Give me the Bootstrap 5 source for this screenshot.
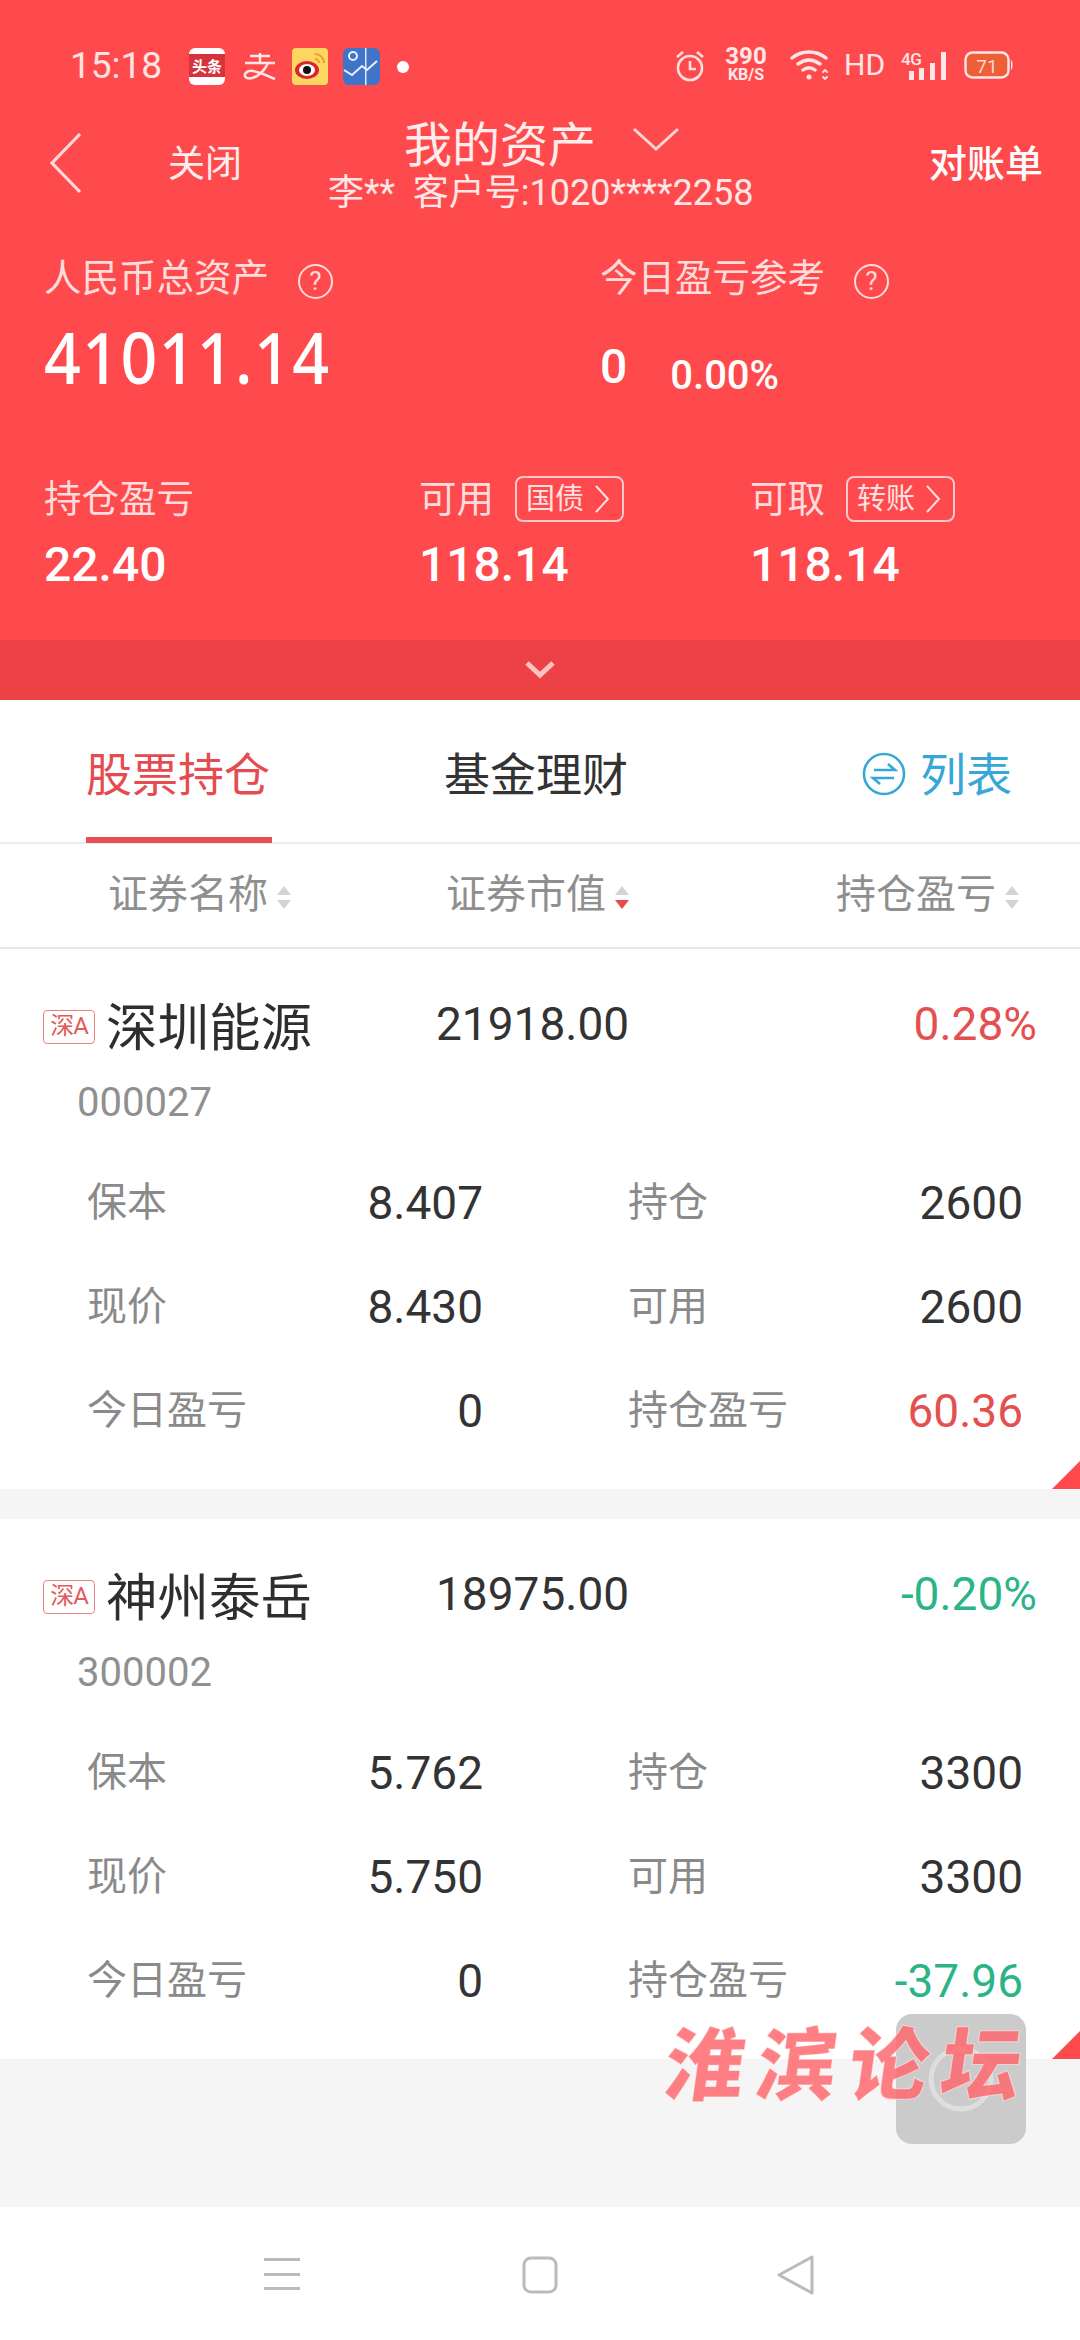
<!DOCTYPE html>
<html lang="zh">
<head>
<meta charset="utf-8">
<title>我的资产</title>
<link href="https://cdn.jsdelivr.net/npm/bootstrap@5.3.0/dist/css/bootstrap.min.css" rel="stylesheet">
<style>
html,body{width:1080px;height:2340px;margin:0;overflow:hidden}
body{position:relative;background:#f5f5f5;font-family:Roboto,"Noto Sans CJK SC",sans-serif;color:#333}
.hero{background:#ff4a4d;color:#fff;height:700px;display:flex;flex-direction:column}
.stbar{height:120px;padding:46px 36px 0 70px;font-size:35px;line-height:40px;color:#fde}
.stbar svg{display:block}
.time{width:113px;color:#ffe3e3;font-size:37px;white-space:nowrap}
.navrow{height:98px;position:relative}
.backic{margin-left:48px;width:40px}
.closetxt{margin-left:80px;font-size:37px;line-height:44px;margin-top:23px;color:#ffecec}
.titlebox{margin-left:86px;width:470px}
.maintitle{font-size:48px;line-height:52px;padding-left:76px;color:#ffecec;height:50px}
.maintitle svg{margin-left:36px;vertical-align:10px}
.subt{font-size:36px;line-height:38px;margin-top:4px;white-space:nowrap;color:#ffe6e6}
.billtxt{font-size:38px;line-height:44px;margin-top:22px;margin-left:auto;margin-right:37px;font-weight:500}
.sumrow{padding:39px 0 0 44px;height:258px}
.sumcol1{width:556px}
.lab{font-size:37.5px;line-height:42px;color:#ffdcdc;white-space:nowrap}
.balrow .lab{height:46px;line-height:46px}
.qm{display:inline-block;width:35px;height:35px;border:2px solid #ffdcdc;border-radius:50%;font-size:26px;line-height:31px;text-align:center;margin-left:29px;vertical-align:1px}
.bignum{font-size:70px;line-height:80px;font-weight:500;margin-top:18px;letter-spacing:1.5px;font-family:"Noto Sans",sans-serif;transform-origin:left;transform:scaleX(.92)}
.daynum{font-size:48px;line-height:60px;margin-top:38px;font-weight:500}
.daypct{font-size:40px;margin-left:43px;font-weight:500;position:relative;top:6px}
.balrow{padding:0 0 0 44px;height:0;flex:1}
.balc1{width:375px}.balc2{width:331px}
.val{font-size:48px;line-height:54px;font-weight:500;margin-top:16px}
.tagbtn{display:inline-flex;align-items:center;height:46px;width:109px;border:2px solid #ffc9c9;border-radius:8px;font-size:29px;padding-left:9px;margin-left:21px;vertical-align:3px;line-height:40px;color:#ffe1e1}
.tagbtn svg{margin-left:10px}
.hero-fold{height:60px;background:#ed4245;display:flex;justify-content:center;align-items:center}
.tabs{height:144px;background:#fff;border-bottom:2px solid #ececec;font-size:46px;position:relative}
.tabact{color:#e64c4f;margin-left:86px;width:186px;height:143px;line-height:150px;border-bottom:6px solid #e84f52;white-space:nowrap;margin-bottom:-1px}
.tab2{margin-left:172px;line-height:150px;color:#333}
.tab3{margin-left:auto;margin-right:68px;color:#36a7d6;line-height:150px;white-space:nowrap}
.tab3 svg{vertical-align:-5px;margin-right:14px}
.thead{height:105px;background:#fff;border-bottom:2px solid #e6e6e6;font-size:40px;color:#8f8f8f;line-height:102px;position:relative}
.thc{white-space:nowrap}
.thc1{margin-left:108px;width:338px}
.thc2{width:390px}
.sorter{display:inline-flex;flex-direction:column;gap:5px;margin-left:9px;vertical-align:middle}
.up{width:0;height:0;border-left:7.5px solid transparent;border-right:7.5px solid transparent;border-bottom:9px solid #d4d4d4}
.dn{width:0;height:0;border-left:7.5px solid transparent;border-right:7.5px solid transparent;border-top:9px solid #d4d4d4}
.dn.on{border-top-color:#e64c4f}
.stock{background:#fff;height:540px;position:relative}
.stock+.stock{margin-top:30px}
.s-top{height:111px}
.mk{width:52px;height:34px;border:1.5px solid #e8827f;border-radius:4px;color:#e05b5b;font-size:24px;line-height:30px;text-align:center;margin:61px 0 0 43px;flex:none;letter-spacing:-1px}
.sname{font-size:51.5px;line-height:60px;margin:50px 0 0 11px;width:330px;flex:none;color:#2e2e2e;white-space:nowrap}
.smv{font-size:46px;line-height:50px;margin-top:50px;width:330px;flex:none;color:#333}
.spct{font-size:46px;line-height:50px;margin:50px 43px 0 auto}
.red{color:#e4504f}.grn{color:#2bb586}
.scode{font-size:40px;line-height:44px;color:#909090;padding-left:77px;margin-top:21px}
.drows{margin-top:26px}
.drow{height:104px;font-size:40px;line-height:48px;padding:0 0 0 87px;align-items:center}
.dl{color:#8a8a8a;width:180px;flex:none;white-space:nowrap}
.dv{width:216px;flex:none;text-align:right;font-size:46px;color:#333}
.dl2{margin-left:145px;color:#8a8a8a;width:170px;flex:none;white-space:nowrap}
.dv2{width:225px;flex:none;text-align:right;font-size:46px;color:#333}
.dv2.red{color:#e4504f}.dv2.grn{color:#2bb586}
.corner{position:absolute;right:0;bottom:0;width:0;height:0;border-left:28px solid transparent;border-bottom:28px solid #ff4a4d}
.botnav{position:absolute;left:0;right:0;bottom:0;height:133px;background:#fff}
.botnav svg{position:absolute}
.floatbtn{position:absolute;left:896px;top:2014px;width:130px;height:130px;background:#cbcbcb;border-radius:16px}
.floatbtn svg{display:block}
.wmark{position:absolute;left:665px;top:2012px;font-size:80px;line-height:110px;font-weight:900;color:rgba(255,106,110,.85);letter-spacing:12px;white-space:nowrap;-webkit-text-stroke:1px rgba(255,255,255,.5);transform:skewX(-8deg)}
</style>
</head>
<body>
<div class="hero">
  <div class="stbar d-flex align-items-start">
    <span class="time">15:18</span>
    <svg width="36" height="37" viewBox="0 0 36 37" style="margin:2px 0 0 6px"><rect width="36" height="37" rx="6" fill="#fff"/><rect y="6" width="36" height="23" fill="#d6333d"/><text x="18" y="24" font-size="15" fill="#fff" text-anchor="middle" font-weight="700" font-family="Noto Sans CJK SC">头条</text></svg>
    <svg width="34" height="30" viewBox="0 0 34 30" style="margin:6px 0 0 18px" fill="none" stroke="#ffe6e6" stroke-width="2.5"><path d="M7 4h20M17 1v9M2 11h30M25 11C20 22 10 28 4 26 -1 24 3 18 10 19c8 1 14 5 22 8"/></svg>
    <svg width="36" height="37" viewBox="0 0 36 37" style="margin:2px 0 0 15px"><rect width="36" height="37" rx="4" fill="#fbd661"/><ellipse cx="15" cy="22" rx="12" ry="9" fill="#d8262c"/><ellipse cx="15" cy="22" rx="8" ry="6" fill="#fff"/><circle cx="15" cy="22" r="4" fill="#111"/><path d="M23 6a9 9 0 0 1 9 9M23 11a4 4 0 0 1 4 4" fill="none" stroke="#f19a27" stroke-width="2"/></svg>
    <svg width="37" height="37" viewBox="0 0 37 37" style="margin:2px 0 0 15px"><rect width="37" height="37" rx="6" fill="#3f74c8"/><rect x="22" y="0" width="1.5" height="37" fill="#dbe8ff"/><path d="M1 22l8 5 10-9 5 4 10-9" fill="none" stroke="#e8f2ff" stroke-width="2"/><circle cx="10" cy="8" r="4" fill="none" stroke="#e8f2ff" stroke-width="2"/></svg>
    <span style="width:12px;height:12px;border-radius:50%;background:#fff;margin:15px 0 0 17px"></span>
    <svg width="30" height="32" viewBox="0 0 30 32" style="margin:4px 0 0 266px" fill="none" stroke="#ffe0e0" stroke-width="2.6"><circle cx="15" cy="18" r="12"/><path d="M15 11v8h6M2 7l6-5M28 7l-6-5"/></svg>
    <span style="margin:0 0 0 19px;width:44px;color:#ffe8e8;font-weight:700;text-align:center;line-height:1"><span class="d-block" style="font-size:24px;line-height:21px">390</span><span class="d-block" style="font-size:16px;line-height:16px">KB/S</span></span>
    <svg width="40" height="32" viewBox="0 0 40 32" style="margin:4px 0 0 22px" fill="none" stroke="#ffe6e6" stroke-width="3.4" stroke-linecap="round"><path d="M2 8c10-8 24-8 34 0M8 14c7-5 15-5 22 0M13 20c4-3 8-3 12 0"/><circle cx="19" cy="27" r="2.5" fill="#ffe6e6" stroke="none"/><path d="M33 22l2-2 2 2M33 27l2 2 2-2" stroke-width="1.8"/></svg>
    <span style="font-size:30px;line-height:40px;margin:-1px 0 0 14px;color:#ffe6e6">HD</span>
    <span style="font-size:17px;font-weight:500;line-height:16px;margin:5px 0 0 16px;color:#ffe6e6;letter-spacing:-.5px">4G</span>
    <svg width="42" height="32" viewBox="0 0 42 32" style="margin:5px 0 0 -13px" fill="#ffe6e6"><rect x="1" y="20" width="5" height="9"/><rect x="11" y="17" width="5" height="12"/><rect x="22" y="12" width="5" height="17"/><rect x="33" y="1" width="5" height="28"/></svg>
    <svg width="50" height="30" viewBox="0 0 50 30" style="margin:5px 0 0 14px"><rect x="1.5" y="1.5" width="43" height="25" rx="7" fill="#ee5f38" stroke="#ffe6e6" stroke-width="2.4"/><path d="M47 9c2 1 2 9 0 10z" fill="#ffe6e6"/><text x="23" y="22" font-size="19" fill="#ffd9c8" text-anchor="middle" font-family="Roboto">71</text></svg>
  </div>
  <div class="navrow d-flex align-items-start">
    <svg class="backic" width="40" height="62" viewBox="0 0 40 62" fill="none" stroke="#ffd9da" stroke-width="3.2" style="margin-top:12px"><path d="M32 2L4 31l28 29"/></svg>
    <div class="closetxt">关闭</div>
    <div class="titlebox">
      <div class="maintitle">我的资产<svg width="48" height="26" viewBox="0 0 48 26" fill="none" stroke="#ffd4d5" stroke-width="3"><path d="M2 3l22 20L46 3"/></svg></div>
      <div class="subt">李** &nbsp;客户号:1020****2258</div>
    </div>
    <div class="billtxt">对账单</div>
  </div>
  <div class="sumrow d-flex">
    <div class="sumcol1">
      <div class="lab">人民币总资产<span class="qm">?</span></div>
      <div class="bignum">41011.14</div>
    </div>
    <div>
      <div class="lab">今日盈亏参考<span class="qm">?</span></div>
      <div class="daynum">0<span class="daypct">0.00%</span></div>
    </div>
  </div>
  <div class="balrow d-flex">
    <div class="balc1"><div class="lab">持仓盈亏</div><div class="val">22.40</div></div>
    <div class="balc2"><div class="lab">可用<span class="tagbtn">国债<svg width="16" height="30" viewBox="0 0 16 30" fill="none" stroke="#ffe1e1" stroke-width="2"><path d="M2 2l12 13L2 28"/></svg></span></div><div class="val">118.14</div></div>
    <div><div class="lab">可取<span class="tagbtn">转账<svg width="16" height="30" viewBox="0 0 16 30" fill="none" stroke="#ffe1e1" stroke-width="2"><path d="M2 2l12 13L2 28"/></svg></span></div><div class="val">118.14</div></div>
  </div>
  <div class="hero-fold"><svg width="30" height="20" viewBox="0 0 30 20" fill="none" stroke="#ffc2c3" stroke-width="5"><path d="M2 3l13 12L28 3"/></svg></div>
</div>
<div class="tabs d-flex">
  <div class="tabact">股票持仓</div>
  <div class="tab2">基金理财</div>
  <div class="tab3"><svg width="44" height="44" viewBox="0 0 44 44" fill="none" stroke="#36a7d6" stroke-width="2.6"><circle cx="22" cy="22" r="20"/><path d="M12 18h21l-7-6M32 26H11l7 6"/></svg>列表</div>
</div>
<div class="thead d-flex">
  <div class="thc thc1">证券名称<span class="sorter"><i class="up"></i><i class="dn"></i></span></div>
  <div class="thc thc2">证券市值<span class="sorter"><i class="up"></i><i class="dn on"></i></span></div>
  <div class="thc">持仓盈亏<span class="sorter"><i class="up"></i><i class="dn"></i></span></div>
</div>
<div class="stock">
  <div class="d-flex s-top">
    <div class="mk">深A</div><div class="sname">深圳能源</div><div class="smv">21918.00</div><div class="spct red">0.28%</div>
  </div>
  <div class="scode">000027</div>
  <div class="drows">
    <div class="d-flex drow"><span class="dl">保本</span><span class="dv">8.407</span><span class="dl2">持仓</span><span class="dv2">2600</span></div>
    <div class="d-flex drow"><span class="dl">现价</span><span class="dv">8.430</span><span class="dl2">可用</span><span class="dv2">2600</span></div>
    <div class="d-flex drow"><span class="dl">今日盈亏</span><span class="dv">0</span><span class="dl2">持仓盈亏</span><span class="dv2 red">60.36</span></div>
  </div>
  <span class="corner"></span>
</div>
<div class="stock">
  <div class="d-flex s-top">
    <div class="mk">深A</div><div class="sname">神州泰岳</div><div class="smv">18975.00</div><div class="spct grn">-0.20%</div>
  </div>
  <div class="scode">300002</div>
  <div class="drows">
    <div class="d-flex drow"><span class="dl">保本</span><span class="dv">5.762</span><span class="dl2">持仓</span><span class="dv2">3300</span></div>
    <div class="d-flex drow"><span class="dl">现价</span><span class="dv">5.750</span><span class="dl2">可用</span><span class="dv2">3300</span></div>
    <div class="d-flex drow"><span class="dl">今日盈亏</span><span class="dv">0</span><span class="dl2">持仓盈亏</span><span class="dv2 grn">-37.96</span></div>
  </div>
  <span class="corner"></span>
</div>
<div class="floatbtn"><svg width="130" height="130" viewBox="0 0 130 130" fill="none" stroke="#dedede" stroke-width="5"><circle cx="65" cy="65" r="30"/></svg></div>
<div class="wmark">淮滨论坛</div>
<div class="botnav">
  <svg width="36" height="32" viewBox="0 0 36 32" style="left:264px;top:51px" fill="#bbb"><rect y="0" width="36" height="3"/><rect y="15" width="36" height="3"/><rect y="29" width="36" height="3"/></svg>
  <svg width="36" height="38" viewBox="0 0 36 38" style="left:522px;top:49px" fill="none" stroke="#bbb" stroke-width="3"><rect x="2" y="2" width="32" height="34" rx="7"/></svg>
  <svg width="40" height="42" viewBox="0 0 40 42" style="left:776px;top:47px" fill="none" stroke="#bbb" stroke-width="3" stroke-linejoin="round"><path d="M36 3L3 21l33 18z"/></svg>
</div>
</body>
</html>
